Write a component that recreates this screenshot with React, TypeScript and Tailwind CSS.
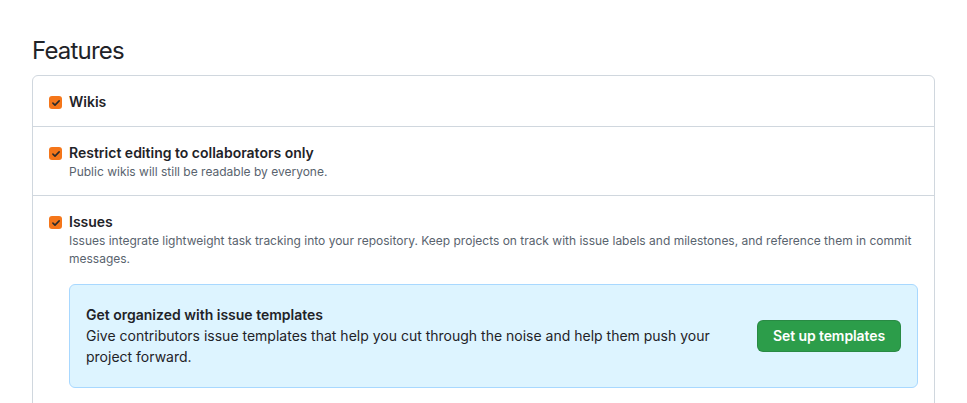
import React from 'react';

const font = { fontFamily: 'Inter, "Noto Sans", sans-serif' };

function Check() {
  return (
    <span className="mt-1 flex h-[13px] w-[13px] shrink-0 items-center justify-center rounded-[3px] bg-[#f5761a]">
      <svg viewBox="0 0 12 12" className="h-[10px] w-[10px]" fill="none">
        <path d="M2.3 6.2 4.8 8.6 9.8 3.4" stroke="#2b2b2b" strokeWidth="1.9" strokeLinecap="round" strokeLinejoin="round" />
      </svg>
    </span>
  );
}

function Row({ title, desc, children, last }: { title: string; desc?: string; children?: React.ReactNode; last?: boolean }) {
  return (
    <div className={`flex gap-[7px] px-4 pt-4 ${last ? 'pb-6' : 'pb-[14px] border-b border-[#d0d7de]'}`}>
      <Check />
      <div className="min-w-0 flex-1">
        <div className="text-sm leading-5 font-semibold text-[#1f2328]">{title}</div>
        {desc && <p className="text-xs leading-[18px] text-[#59636e]">{desc}</p>}
        {children}
      </div>
    </div>
  );
}

export default function App() {
  return (
    <div style={font} className="min-h-screen bg-white px-8 pt-[36px] text-[#1f2328]">
      <h2 className="mb-[9px] text-2xl leading-[30px] font-normal tracking-[-0.8px]">Features</h2>
      <div className="rounded-md border border-[#d0d7de]">
        <Row title="Wikis" />
        <Row title="Restrict editing to collaborators only" desc="Public wikis will still be readable by everyone." />
        <Row
          last
          title="Issues"
          desc="Issues integrate lightweight task tracking into your repository. Keep projects on track with issue labels and milestones, and reference them in commit messages."
        >
          <div className="mt-4 flex items-center gap-4 rounded-md border border-[#a8d8ff] bg-[#ddf4ff] px-4 py-5">
            <div className="flex-1">
              <div className="text-sm leading-5 font-semibold">Get organized with issue templates</div>
              <p className="text-sm leading-[21px]">
                Give contributors issue templates that help you cut through the noise and help them push your project forward.
              </p>
            </div>
            <button className="h-8 rounded-md border border-[#1b1f2426] bg-[#2c9d4a] px-[15px] text-sm font-semibold tracking-[-0.1px] text-white">
              Set up templates
            </button>
          </div>
        </Row>
      </div>
    </div>
  );
}
